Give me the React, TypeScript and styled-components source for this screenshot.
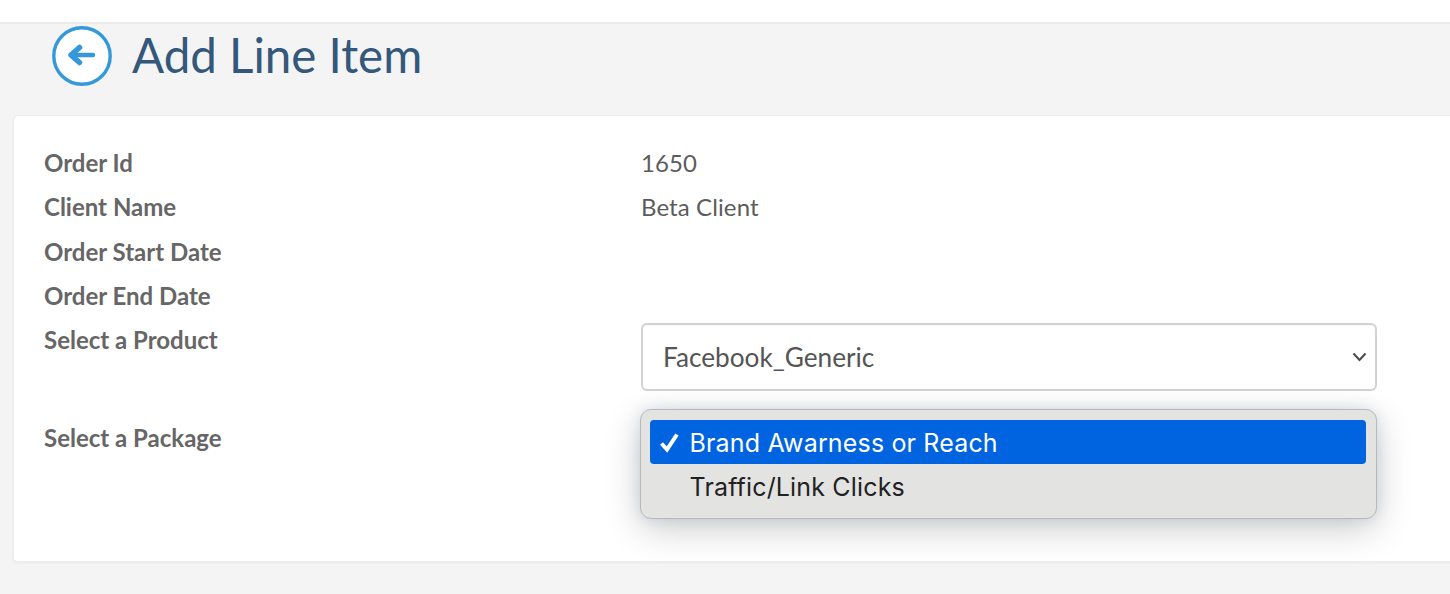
import React from "react";
import styled, { createGlobalStyle } from "styled-components";

const Global = createGlobalStyle`
  html, body { margin: 0; padding: 0; }
  body { background: #f4f4f4; font-family: Lato, "Liberation Sans", sans-serif; overflow: hidden; }
`;

const Page = styled.div`
  width: 1450px;
  height: 594px;
  overflow: hidden;
`;

const TopBar = styled.div`
  height: 22px;
  background: #ffffff;
  border-bottom: 2px solid #ebebeb;
`;

const Header = styled.header`
  height: 91px;
  display: flex;
  align-items: flex-start;
  gap: 20px;
  padding-left: 52px;
`;

const BackIcon = styled.svg`
  width: 60px;
  height: 60px;
  margin-top: 2px;
  flex: none;
`;

const Title = styled.h1`
  margin: 1px 0 0;
  font-family: Lato, sans-serif;
  font-weight: 400;
  font-size: 47.5px;
  line-height: 60px;
  color: #34587c;
`;

const Card = styled.main`
  position: relative;
  margin-left: 12px;
  height: 449px;
  box-sizing: border-box;
  padding: 25px 0 0 30px;
  background: #ffffff;
  border: solid #eeeeee;
  border-width: 1px 0 3px 2px;
  border-radius: 6px 0 0 6px;
`;

const Row = styled.div<{ $h: number }>`
  display: grid;
  grid-template-columns: 597px 736px;
  height: ${(p) => p.$h}px;
  line-height: 44px;
`;

const Label = styled.div`
  font-size: 24px;
  font-weight: 700;
  color: #666666;
`;

const Value = styled.div`
  font-size: 24px;
  font-weight: 400;
  color: #5c5c5c;
  letter-spacing: 0.1px;
`;

const SelectBox = styled.div`
  box-sizing: border-box;
  height: 68px;
  margin-top: 5px;
  padding: 0 8px 0 20px;
  display: flex;
  align-items: center;
  justify-content: space-between;
  background: #ffffff;
  border: 2px solid #d2d2d2;
  border-radius: 6px;
  box-shadow: inset 0 1px 2px rgba(0, 0, 0, 0.04);
  font-size: 26.2px;
  color: #555555;
`;

const Menu = styled.div`
  position: absolute;
  left: 626px;
  top: 293px;
  width: 737px;
  height: 110px;
  box-sizing: border-box;
  padding: 10px 10px 10px 9px;
  background: #e3e3e2;
  border: 1px solid #b9b9b9;
  border-radius: 11px;
  box-shadow: 0 10px 36px rgba(0, 0, 0, 0.2), 0 0 14px rgba(40, 100, 180, 0.14);
  font-family: Inter, Roboto, sans-serif;
  font-size: 25px;
`;

const Option = styled.div<{ $active?: boolean }>`
  height: 44px;
  display: flex;
  align-items: center;
  border-radius: 4px;
  background: ${(p) => (p.$active ? "#0064e1" : "transparent")};
  color: ${(p) => (p.$active ? "#ffffff" : "#222222")};
`;

const CheckSlot = styled.svg`
  width: 40px;
  height: 44px;
  flex: none;
`;

const OptionText = styled.span`
  letter-spacing: 0.16px;
  position: relative;
  top: 1px;
  left: -0.5px;
`;

export default function App() {
  return (
    <Page>
      <Global />
      <TopBar />
      <Header>
        <BackIcon viewBox="0 0 60 60" aria-hidden="true">
          <circle cx="30" cy="30" r="28.2" fill="#fff" stroke="#3498db" strokeWidth="3.4" />
          <path d="M20 29H41" fill="none" stroke="#3498db" strokeWidth="4.5" strokeLinecap="round" />
          <path d="M27.5 21.5L19 29L27.5 36.5" fill="none" stroke="#3498db" strokeWidth="5.5" strokeLinecap="round" strokeLinejoin="round" />
        </BackIcon>
        <Title>Add Line Item</Title>
      </Header>
      <Card>
        <Row $h={44}><Label>Order Id</Label><Value>1650</Value></Row>
        <Row $h={45}><Label>Client Name</Label><Value>Beta Client</Value></Row>
        <Row $h={44}><Label>Order Start Date</Label><Value /></Row>
        <Row $h={44}><Label>Order End Date</Label><Value /></Row>
        <Row $h={98}>
          <Label>Select a Product</Label>
          <SelectBox>
            Facebook_Generic
            <svg width="15" height="10" viewBox="0 0 15 10" aria-hidden="true">
              <path d="M1.5 1.5L7.5 8L13.5 1.5" fill="none" stroke="#4a4a4a" strokeWidth="2" />
            </svg>
          </SelectBox>
        </Row>
        <Row $h={44}><Label>Select a Package</Label><Value /></Row>
        <Menu>
          <Option $active>
            <CheckSlot viewBox="0 0 40 44" aria-hidden="true">
              <path d="M11.5 23.5L17 29.5L27 14.5" fill="none" stroke="#fff" strokeWidth="4" />
            </CheckSlot>
            <OptionText>Brand Awarness or Reach</OptionText>
          </Option>
          <Option>
            <CheckSlot viewBox="0 0 40 44" aria-hidden="true" />
            <OptionText>Traffic/Link Clicks</OptionText>
          </Option>
        </Menu>
      </Card>
    </Page>
  );
}
